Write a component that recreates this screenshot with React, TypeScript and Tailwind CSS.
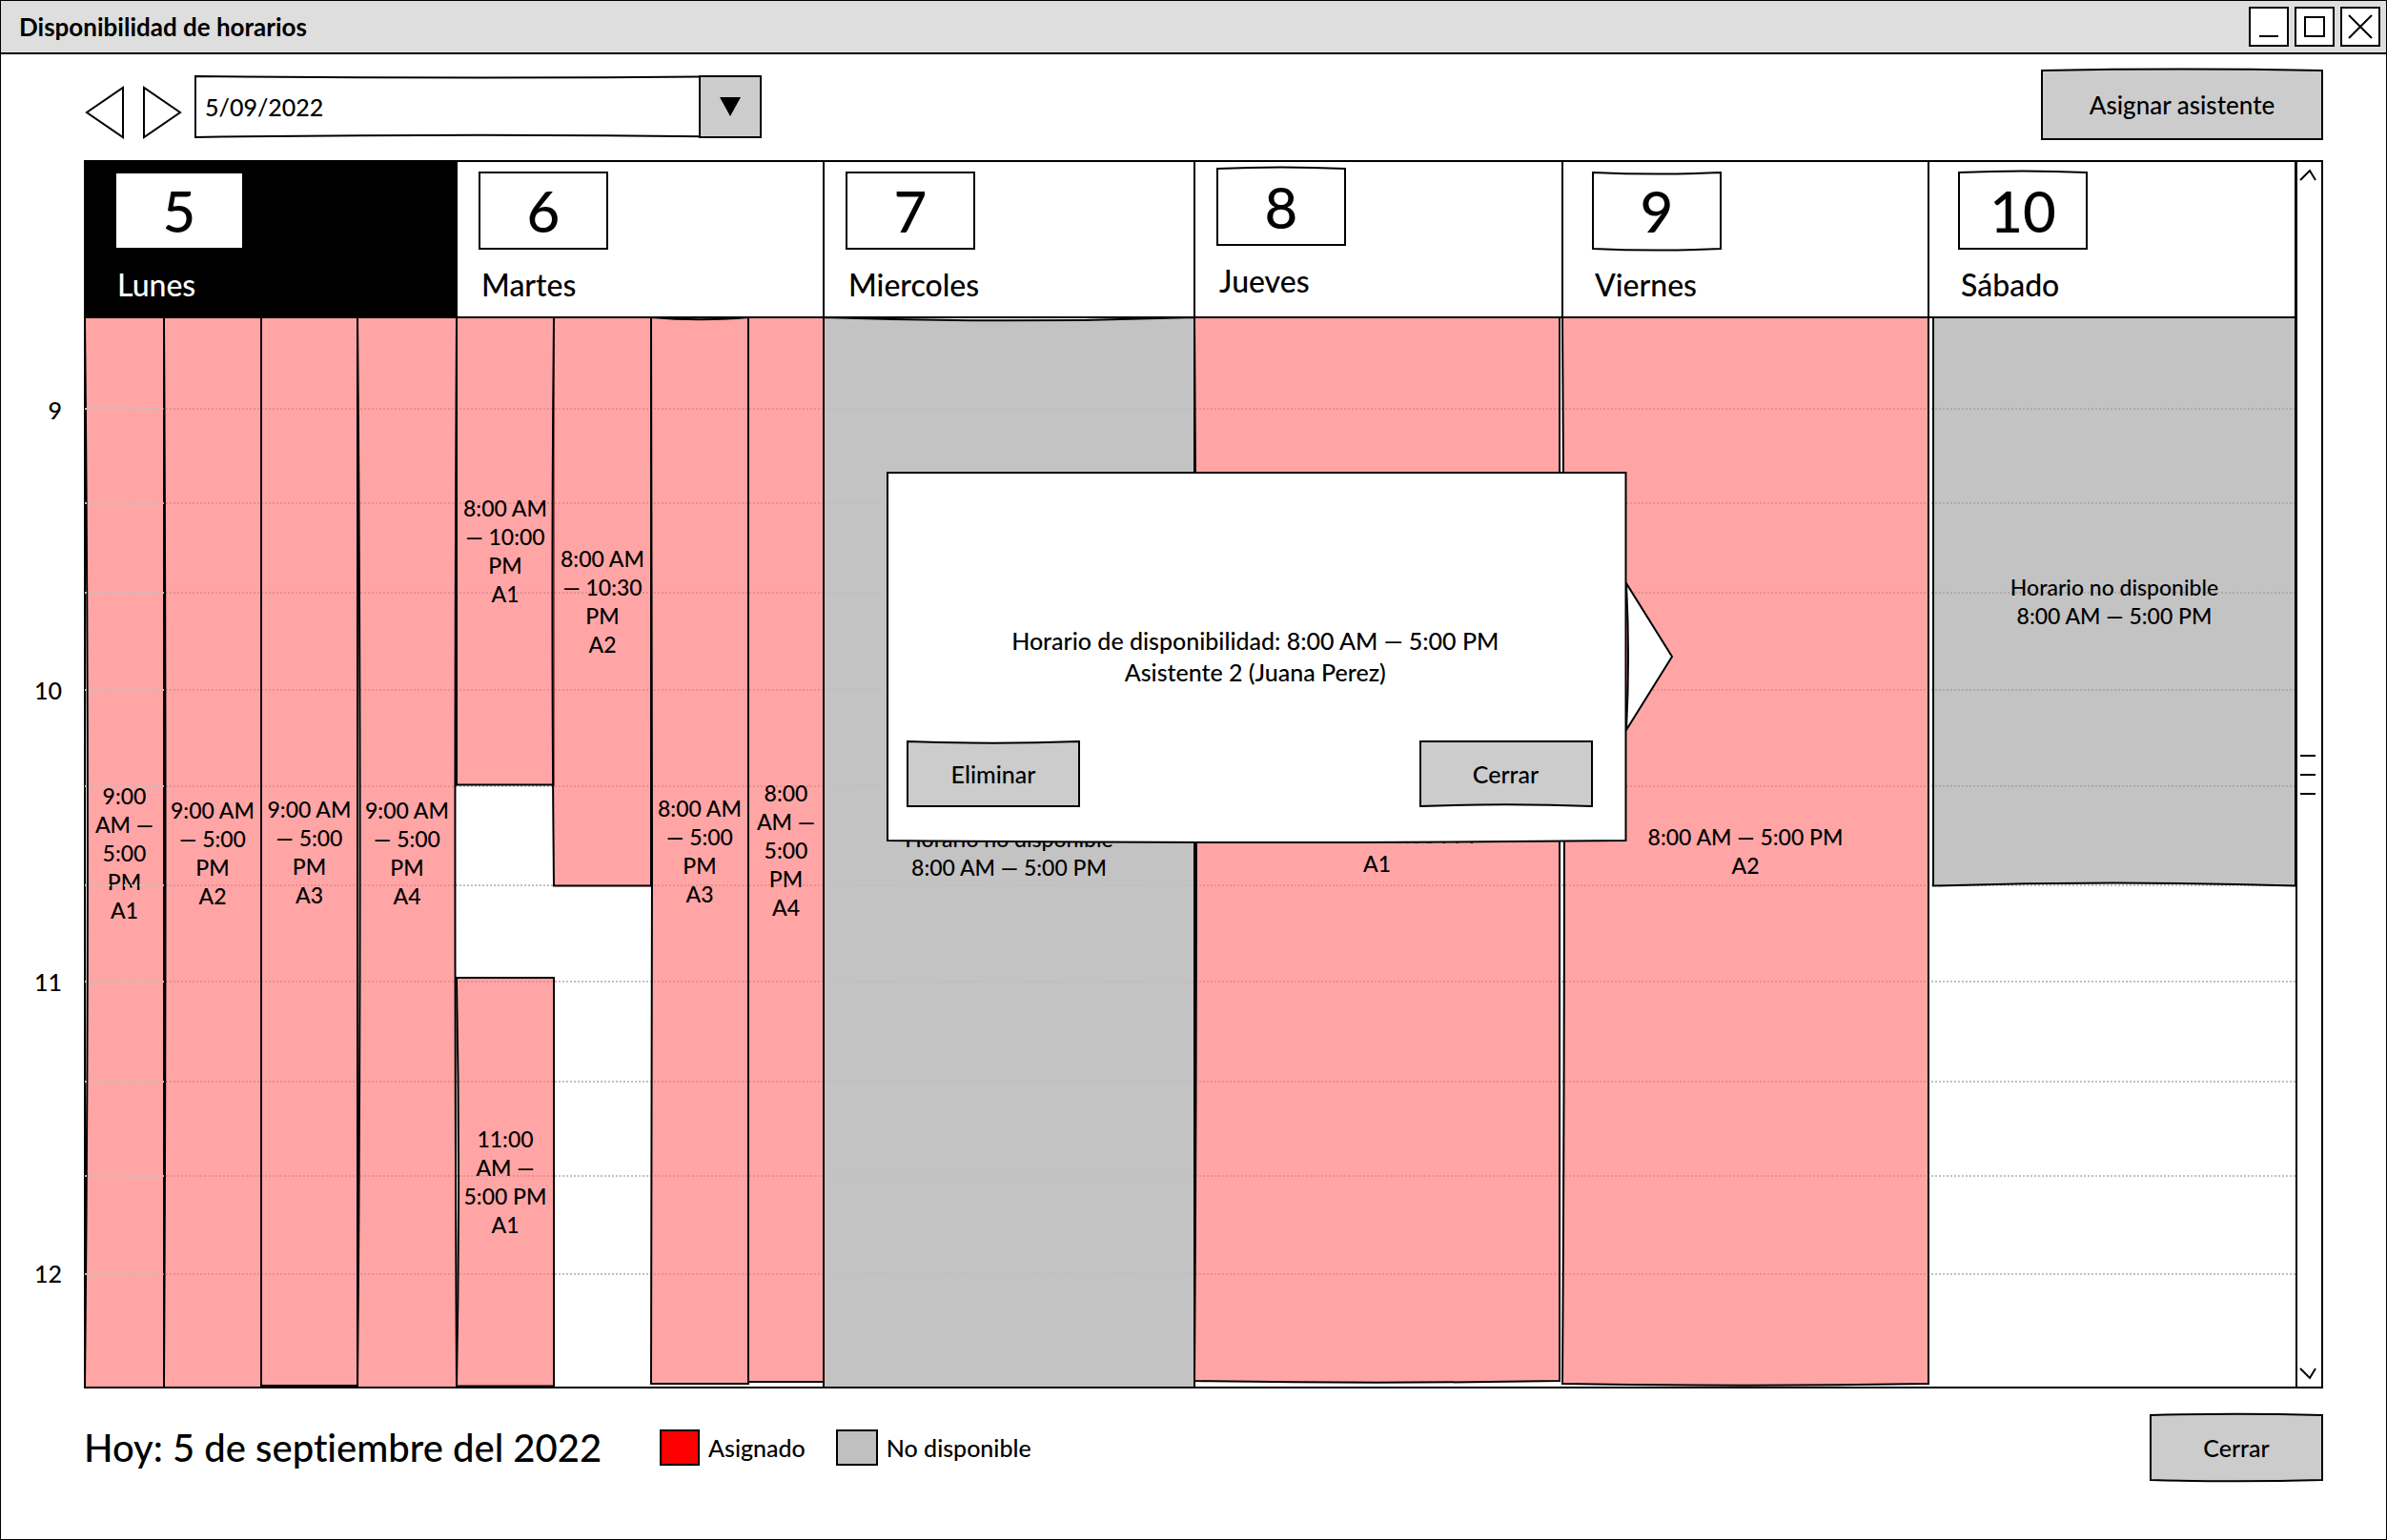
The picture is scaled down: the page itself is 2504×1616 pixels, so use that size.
import { type ReactNode } from "react";

type Bend = { t?: number; r?: number; b?: number; l?: number };

/* Hand-drawn outline that stretches to its box; bends bow each side. */
function Sketch({ t = 0, r = 0, b = 0, l = 0, className = "fill-none" }: Bend & { className?: string }) {
  return (
    <svg
      aria-hidden="true"
      className={`pointer-events-none absolute inset-0 size-full overflow-visible stroke-black stroke-2 ${className}`}
      viewBox="0 0 100 100"
      preserveAspectRatio="none"
    >
      <path
        vectorEffect="non-scaling-stroke"
        d={`M0 0Q50 ${t} 100 0Q${100 + r} 50 100 100Q50 ${100 + b} 0 100Q${l} 50 0 0Z`}
      />
    </svg>
  );
}

function SketchButton({ children, wide, bend }: { children: ReactNode; wide?: boolean; bend: Bend }) {
  return (
    <button type="button" className={`relative shrink-0 cursor-pointer ${wide ? "h-[72px] w-[294px] text-[26px]" : "h-[68px] w-[180px] text-[25px]"}`}>
      <Sketch {...bend} className="fill-[#cccccc]" />
      <span className="relative">{children}</span>
    </button>
  );
}

type Block = { size: number; kind?: "busy" | "off" | "faded"; lines?: string[]; bend?: Bend };
type Lane = { width: number; blocks: Block[]; linesOnTop?: boolean };
type Day = {
  num: string;
  name: string;
  width: number;
  lanes: Lane[];
  active?: boolean;
  bend?: Bend;
  raised?: boolean;
  inset?: boolean;
};

const days: Day[] = [
  {
    num: "5", name: "Lunes", width: 390, active: true, inset: true,
    lanes: [
      { width: 83, linesOnTop: true, blocks: [{ size: 1122, kind: "busy", lines: ["9:00", "AM —", "5:00", "PM", "A1"], bend: { l: 7 } }] },
      { width: 102, blocks: [{ size: 1122, kind: "busy", lines: ["9:00 AM", "— 5:00", "PM", "A2"], bend: { l: 3 } }] },
      { width: 101, blocks: [{ size: 1120, kind: "busy", lines: ["9:00 AM", "— 5:00", "PM", "A3"] }, { size: 2 }] },
      { width: 104, blocks: [{ size: 1122, kind: "busy", lines: ["9:00 AM", "— 5:00", "PM", "A4"], bend: { l: 5, r: -3 } }] },
    ],
  },
  {
    num: "6", name: "Martes", width: 385,
    lanes: [
      {
        width: 102,
        blocks: [
          { size: 490, kind: "busy", lines: ["8:00 AM", "— 10:00", "PM", "A1"] },
          { size: 202 },
          { size: 428, kind: "busy", lines: ["11:00", "AM —", "5:00 PM", "A1"], bend: { l: 4 } },
          { size: 2 },
        ],
      },
      { width: 102, blocks: [{ size: 596, kind: "busy", lines: ["8:00 AM", "— 10:30", "PM", "A2"], bend: { l: -3 } }, { size: 526 }] },
      { width: 102, blocks: [{ size: 1118, kind: "busy", lines: ["8:00 AM", "— 5:00", "PM", "A3"], bend: { l: 2, t: 0.4 } }, { size: 4 }] },
      { width: 79, blocks: [{ size: 1116, kind: "busy", lines: ["8:00", "AM —", "5:00", "PM", "A4"] }, { size: 6 }] },
    ],
  },
  {
    num: "7", name: "Miercoles", width: 389,
    lanes: [{ width: 1, blocks: [{ size: 1122, kind: "off", lines: ["Horario no disponible", "8:00 AM — 5:00 PM"], bend: { t: 0.6 } }] }],
  },
  {
    num: "8", name: "Jueves", width: 386, raised: true, bend: { t: -4 },
    lanes: [
      { width: 383, blocks: [{ size: 1115, kind: "busy", lines: ["8:00 AM — 5:00 PM", "A1"], bend: { l: 1, b: 0.3 } }, { size: 7 }] },
      { width: 3, blocks: [{ size: 1 }] },
    ],
  },
  {
    num: "9", name: "Viernes", width: 384, inset: true, bend: { t: 4, b: 4 },
    lanes: [{ width: 1, blocks: [{ size: 1118, kind: "busy", lines: ["8:00 AM — 5:00 PM", "A2"], bend: { l: 1, b: 0.3 } }, { size: 4 }] }],
  },
  {
    num: "10", name: "Sábado", width: 385, inset: true, bend: { t: -4 },
    lanes: [
      { width: 5, blocks: [{ size: 1 }] },
      { width: 380, blocks: [{ size: 596, kind: "faded", lines: ["Horario no disponible", "8:00 AM — 5:00 PM"], bend: { b: -1 } }, { size: 526 }] },
    ],
  },
];

const rows = [
  { size: 97, label: "9" },
  { size: 98 },
  { size: 94 },
  { size: 102, label: "10" },
  { size: 100 },
  { size: 104 },
  { size: 101, label: "11" },
  { size: 105 },
  { size: 98 },
  { size: 103, label: "12" },
  { size: 120 },
];

function HourLines() {
  return (
    <div aria-hidden="true" className="pointer-events-none absolute inset-0 flex flex-col">
      {rows.map((row, i) => (
        <div
          key={i}
          className={`basis-0 ${i < rows.length - 1 ? "border-b-2 border-dotted border-[#c0c0c0]" : ""}`}
          style={{ flexGrow: row.size }}
        />
      ))}
    </div>
  );
}

const fills = {
  busy: "fill-[#ff7373]/64",
  off: "fill-[#bebebe]/92",
  faded: "fill-[#999999]/59",
};

function BlockView({ block }: { block: Block }) {
  return (
    <div
      className="relative flex min-h-0 basis-0 flex-col items-center justify-center text-center text-[23px] leading-[30px] whitespace-nowrap"
      style={{ flexGrow: block.size }}
    >
      {block.kind && <Sketch {...block.bend} className={fills[block.kind]} />}
      {block.lines?.map((line, i) => (
        <span key={i} className="relative">{line}</span>
      ))}
    </div>
  );
}

function DayColumn({ day }: { day: Day }) {
  return (
    <section className="flex min-w-0 basis-0 flex-col" style={{ flexGrow: day.width }}>
      <header
        className={`relative flex h-[164px] shrink-0 flex-col items-start gap-[18px] ${day.raised ? "pt-2" : "pt-3"} ${day.inset ? "pl-8" : "pl-6"} ${day.active ? "bg-black text-white" : "bg-white"}`}
      >
        <Sketch />
        <div className="relative flex h-20 w-[134px] items-center justify-center bg-white text-6xl text-black">
          <Sketch {...day.bend} className="fill-white" />
          <span className="relative">{day.num}</span>
        </div>
        <h2 className="relative px-[2px] text-[32px] leading-10">{day.name}</h2>
      </header>
      <div className="flex min-h-0 flex-1">
        {day.lanes.map((lane, i) => (
          <div key={i} className="relative flex min-w-0 basis-0 flex-col" style={{ flexGrow: lane.width }}>
            {lane.blocks.map((block, j) => (
              <BlockView key={j} block={block} />
            ))}
            {lane.linesOnTop && <HourLines />}
          </div>
        ))}
      </div>
    </section>
  );
}

function WindowButton({ label, children }: { label: string; children: ReactNode }) {
  return (
    <button type="button" aria-label={label} className="size-[42px] border-2 border-black bg-white">
      <svg viewBox="0 0 38 38" className="size-full fill-none stroke-black stroke-2">{children}</svg>
    </button>
  );
}

export default function App() {
  return (
    <div className="flex min-h-screen flex-col border border-black bg-white font-['Lato',sans-serif] text-[25px] leading-8 font-medium text-black [font-variant-ligatures:none]">
      <header className="flex h-14 shrink-0 items-center justify-between border-b-2 border-black bg-[#dedede] pr-[6px] pl-[19px]">
        <h1 className="text-[26px] font-bold">Disponibilidad de horarios</h1>
        <div className="flex gap-[6px]">
          <WindowButton label="Minimizar"><path d="M9 29H29" /></WindowButton>
          <WindowButton label="Maximizar"><path d="M9 9H29V29H9Z" /></WindowButton>
          <WindowButton label="Cerrar ventana"><path d="M7 7L31 31M31 7L7 31" /></WindowButton>
        </div>
      </header>

      <div className="flex items-start justify-between pt-[17px] pr-[67px] pl-[88px]">
        <div className="flex items-start gap-[14px] pt-[6px]">
          <div className="flex gap-[18px] pt-[10px]">
            <button type="button" aria-label="Día anterior">
              <svg viewBox="0 0 42 56" className="h-14 w-[42px] fill-white stroke-black stroke-2"><path d="M40 2V54L2 28Z" /></svg>
            </button>
            <button type="button" aria-label="Día siguiente">
              <svg viewBox="0 0 42 56" className="h-14 w-[42px] fill-white stroke-black stroke-2"><path d="M2 2V54L40 28Z" /></svg>
            </button>
          </div>
          <div className="relative h-16 w-[593px]">
            <Sketch t={5} b={-7} className="fill-white" />
            <select aria-label="Fecha" defaultValue="5/09/2022" className="relative size-full appearance-none bg-transparent pl-[10px] text-[25px]">
              <option>5/09/2022</option>
            </select>
            <div className="pointer-events-none absolute inset-y-0 right-0 flex w-16 items-center justify-center bg-[#cccccc]">
              <Sketch />
              <svg viewBox="0 0 22 20" className="h-5 w-[22px]"><path d="M0 0H22L11 20Z" /></svg>
            </div>
          </div>
        </div>
        <SketchButton wide bend={{ t: -4 }}>Asignar asistente</SketchButton>
      </div>

      <main className="mt-[23px] flex flex-1 pr-[67px]">
        <div className="flex w-[88px] shrink-0 flex-col pt-[164px] pr-6">
          {rows.map((row, i) => (
            <div key={i} className="flex basis-0 items-end justify-end" style={{ flexGrow: row.size }}>
              {row.label && <div className="flex h-0 items-center">{row.label}</div>}
            </div>
          ))}
        </div>
        <div className="relative flex min-w-0 flex-1">
          <Sketch />
          <div className="relative flex min-w-0 flex-1">
            <div className="absolute inset-x-0 top-[164px] bottom-0"><HourLines /></div>
            <div className="relative flex min-w-0 flex-1">
              {days.map((day) => (
                <DayColumn key={day.num} day={day} />
              ))}
            </div>
          </div>
          <div className="relative flex w-7 shrink-0 flex-col items-center justify-between border-l-2 border-black py-2 pr-1">
            <button type="button" aria-label="Subir">
              <svg viewBox="0 0 18 14" className="h-[14px] w-[18px] fill-none stroke-black stroke-2"><path d="M1 12L11 2L17 12" /></svg>
            </button>
            <div className="flex w-4 flex-col gap-[18px]">
              <div className="h-[2px] bg-black" />
              <div className="h-[2px] bg-black" />
              <div className="h-[2px] bg-black" />
            </div>
            <button type="button" aria-label="Bajar">
              <svg viewBox="0 0 18 14" className="h-[14px] w-[18px] fill-none stroke-black stroke-2"><path d="M1 2L11 12L17 2" /></svg>
            </button>
          </div>

          <div role="dialog" aria-label="Horario de disponibilidad" className="absolute top-[327px] left-[842px] grid h-[30%] w-[33%] grid-rows-[1fr_auto_1fr] pr-9 pb-9 pl-[21px]">
            <svg aria-hidden="true" viewBox="0 0 50 156" className="absolute top-1/2 left-full h-[156px] w-[50px] -translate-y-1/2 fill-white stroke-black stroke-2">
              <path d="M0 1L48 78L0 155Q4 78 0 1Z" />
            </svg>
            <Sketch b={1} className="fill-white" />
            <p className="relative row-start-2 pt-9 pl-3 text-center leading-[33px]">
              Horario de disponibilidad: 8:00 AM — 5:00 PM<br />Asistente 2 (Juana Perez)
            </p>
            <div className="relative row-start-3 flex items-end justify-between">
              <SketchButton bend={{ t: 5 }}>Eliminar</SketchButton>
              <SketchButton bend={{ b: -5 }}>Cerrar</SketchButton>
            </div>
          </div>
        </div>
      </main>

      <footer className="flex items-center justify-between pt-[29px] pr-[67px] pb-[62px] pl-[87px]">
        <div className="flex items-center">
          <p className="w-[604px] text-[40px] whitespace-nowrap">Hoy: 5 de septiembre del 2022</p>
          <div className="flex items-center gap-8">
            <div className="flex items-center gap-[9px]">
              <div className="h-[38px] w-[42px] border-2 border-black bg-[#ff0000]" />
              <span>Asignado</span>
            </div>
            <div className="flex items-center gap-[9px]">
              <div className="h-[38px] w-11 border-2 border-black bg-[#c0c0c0]" />
              <span>No disponible</span>
            </div>
          </div>
        </div>
        <SketchButton bend={{ t: -4, b: 4 }}>Cerrar</SketchButton>
      </footer>
    </div>
  );
}
